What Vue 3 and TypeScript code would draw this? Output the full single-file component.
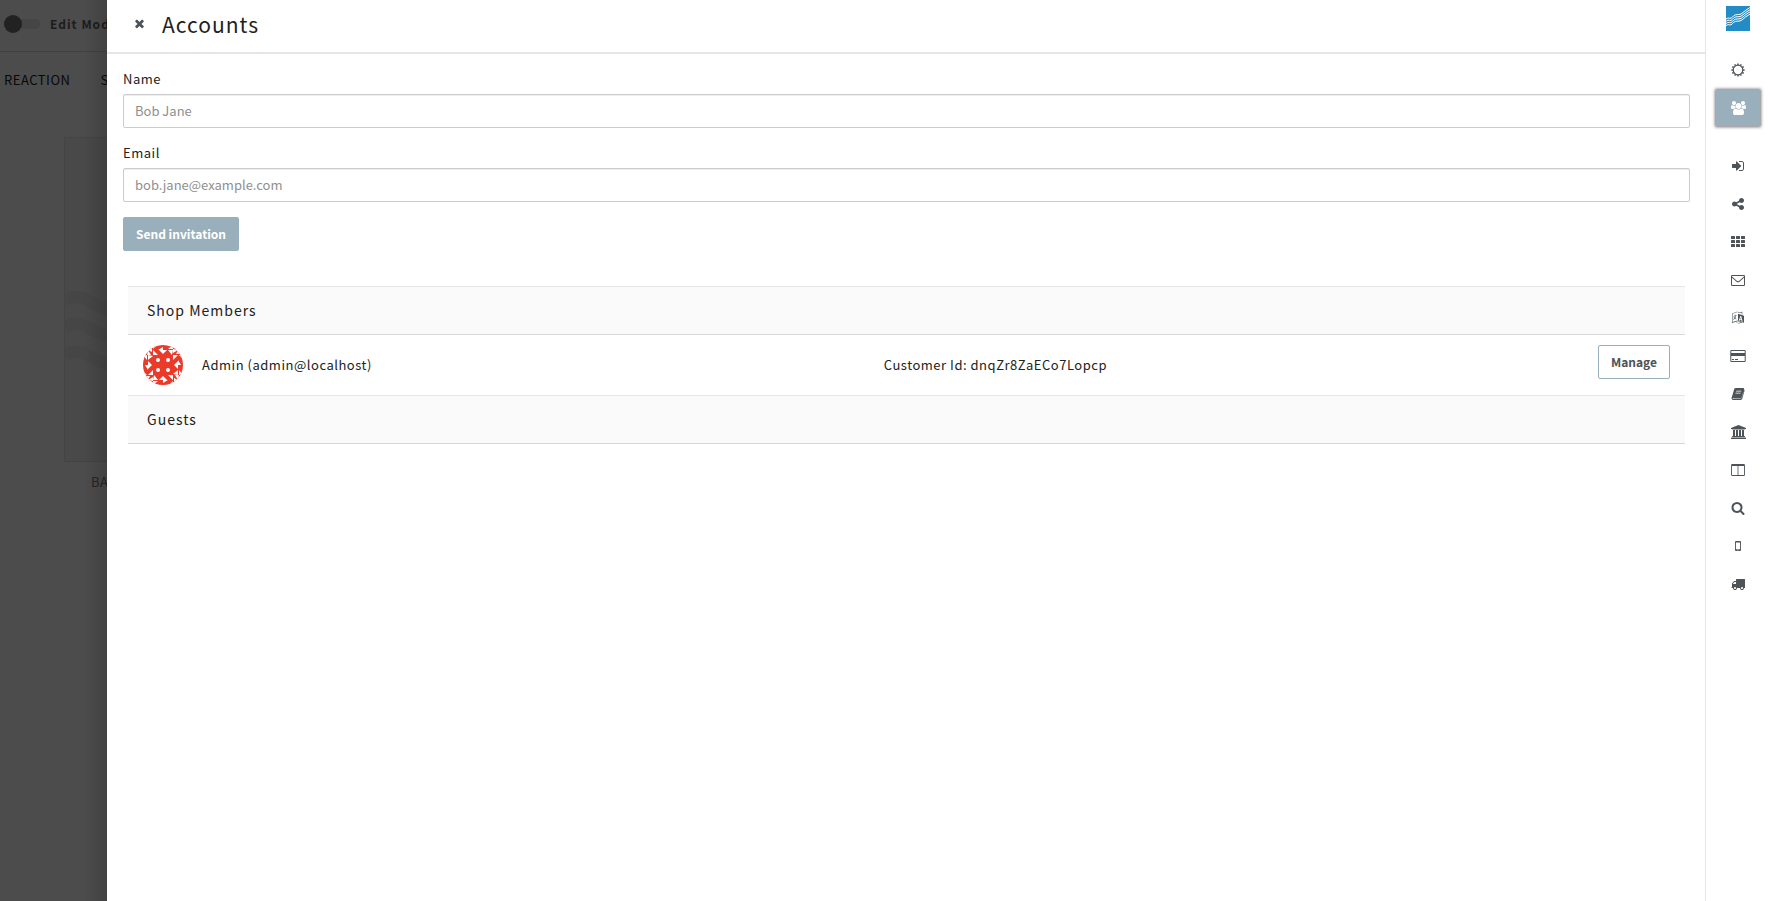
<script setup lang="ts">
import { ref } from 'vue'

interface Tool {
  id: string
  label: string
  box: string
  width: number
  path: string
}

interface Member {
  name: string
  email: string
  customerId: string
}

const name = ref('')
const email = ref('')
const editMode = ref(false)
const active = ref('accounts')

const members: Member[] = [
  { name: 'Admin', email: 'admin@localhost', customerId: 'dnqZr8ZaECo7Lopcp' },
]

const accounts: Tool = {
  id: 'accounts',
  label: 'Accounts',
  box: '0 0 1920 1792',
  width: 15,
  path: 'M593 896q-162 5-265 128h-134q-82 0-138-40.5t-56-118.5q0-353 124-353 6 0 43.5 21t97.5 42.5 119 21.5q67 0 133-23-5 37-5 66 0 139 81 256zm1071 637q0 120-73 189.5t-194 69.5h-874q-121 0-194-69.5t-73-189.5q0-53 3.5-103.5t14-109 26.5-108.5 43-97.5 62-81 85.5-53.5 111.5-20q10 0 43 21.5t73 48 107 48 135 21.5 135-21.5 107-48 73-48 43-21.5q61 0 111.5 20t85.5 53.5 62 81 43 97.5 26.5 108.5 14 109 3.5 103.5zm-1024-1277q0 106-75 181t-181 75-181-75-75-181 75-181 181-75 181 75 75 181zm704 384q0 159-112.5 271.5t-271.5 112.5-271.5-112.5-112.5-271.5 112.5-271.5 271.5-112.5 271.5 112.5 112.5 271.5zm576 225q0 78-56 118.5t-138 40.5h-134q-103-123-265-128 81-117 81-256 0-29-5-66 66 23 133 23 59 0 119-21.5t97.5-42.5 43.5-21q124 0 124 353zm-128-609q0 106-75 181t-181 75-181-75-75-181 75-181 181-75 181 75 75 181z',
}

const tools: Tool[] = [
  {
    id: 'login', label: 'Login services', box: '0 0 1792 1792', width: 14,
    path: 'M1312 896q0 26-19 45l-544 544q-19 19-45 19t-45-19-19-45v-288h-448q-26 0-45-19t-19-45v-384q0-26 19-45t45-19h448v-288q0-26 19-45t45-19 45 19l544 544q19 19 19 45zm352-352v704q0 119-84.500 203.500t-203.500 84.500h-320q-13 0-22.500-9.500t-9.500-22.500q0-4-1-20t-.5-26.500 3-23.500 10-19.500 20.500-6.500h320q66 0 113-47t47-113v-704q0-66-47-113t-113-47h-312l-11.500-1-11.500-3-8-5.500-7-9-2-13.500q0-4-1-20t-.5-26.500 3-23.500 10-19.500 20.500-6.500h320q119 0 203.500 84.500t84.500 203.500z',
  },
  {
    id: 'social', label: 'Social', box: '0 0 1792 1792', width: 14,
    path: 'M1344 1024q133 0 226.500 93.500t93.500 226.500-93.500 226.500-226.500 93.500-226.500-93.500-93.500-226.500q0-12 2-34l-360-180q-92 86-218 86-133 0-226.500-93.500t-93.500-226.500 93.500-226.500 226.500-93.500q126 0 218 86l360-180q-2-22-2-34 0-133 93.500-226.500t226.500-93.500 226.500 93.500 93.500 226.500-93.500 226.500-226.500 93.500q-126 0-218-86l-360 180q2 22 2 34t-2 34l360 180q92-86 218-86z',
  },
  {
    id: 'catalog', label: 'Catalog', box: '0 0 14 14', width: 14,
    path: 'M.6 1h2.800q.6 0 .6.600v1.800q0 .6-.6.600h-2.800q-.6 0-.6-.6v-1.800q0-.6.600-.6zM5.600 1h2.800q.6 0 .6.600v1.800q0 .6-.6.600h-2.800q-.6 0-.6-.6v-1.800q0-.6.600-.6zM10.600 1h2.800q.6 0 .6.600v1.800q0 .6-.6.600h-2.800q-.6 0-.6-.6v-1.800q0-.6.600-.6zM.6 5h2.800q.6 0 .6.600v1.800q0 .6-.6.600h-2.800q-.6 0-.6-.6v-1.800q0-.6.600-.6zM5.600 5h2.800q.6 0 .6.600v1.800q0 .6-.6.600h-2.800q-.6 0-.6-.6v-1.800q0-.6.600-.6zM10.600 5h2.800q.6 0 .6.600v1.800q0 .6-.6.600h-2.800q-.6 0-.6-.6v-1.800q0-.6.600-.6zM.6 9h2.800q.6 0 .6.600v1.800q0 .6-.6.600h-2.800q-.6 0-.6-.6v-1.800q0-.6.600-.6zM5.600 9h2.800q.6 0 .6.600v1.800q0 .6-.6.600h-2.800q-.6 0-.6-.6v-1.800q0-.6.600-.6zM10.600 9h2.800q.6 0 .6.600v1.800q0 .6-.6.600h-2.800q-.6 0-.6-.6v-1.800q0-.6.600-.6z',
  },
  {
    id: 'email', label: 'Email', box: '0 0 14 14', width: 14,
    path: 'M1.200 2h11.600q1.200 0 1.200 1.200v8.600q0 1.200-1.200 1.200h-11.600q-1.200 0-1.200-1.200v-8.600q0-1.200 1.200-1.200zM1 4.800v7q0 .2.200.2h11.600q.2 0 .2-.2v-7l-4.200 3.600q-1 .9-1.800.9t-1.800-.9zM1 3.200v.3l4.500 3.900q.9.800 1.500.8t1.500-.8l4.500-3.900v-.3q0-.2-.2-.2h-11.600q-.2 0-.2.200z',
  },
  {
    id: 'i18n', label: 'Languages', box: '0 0 14 14', width: 14,
    path: 'M1 2.500l5.500-2v.4l-5 1.900v8.300l5-1.700 6.500 2v.5l-2-.5-3 1-3-.8v-.3l2.800.6 2-.7-3.300-1-5.500 1.700zM3.700 3.500h.6v1h1.400v.6h-.7q-.2 1.200-.8 2l1.200.9-.3.600-1.300-1-1.300 1.200-.4-.5 1.300-1.200-.7-1 .5-.3.600.8.600-1.300-2 .3v-.5l1.300-.2zM7 2.800l6 2v7l-6-1.900zM9.300 5l-1.500 4.500.9.300.3-.9 1.500.4.300 1.100.9.300-1.400-5.400zM9.700 6.200l.5 2.300-1-.3zM6.800 1.500l4.500-.8v3l-.6-.2v-2.100l-3.900.7z',
  },
  {
    id: 'payments', label: 'Payments', box: '0 0 16 14', width: 16,
    path: 'M1.500 1h13q1.200 0 1.200 1.200v9.600q0 1.200-1.200 1.200h-13q-1.200 0-1.200-1.200v-9.600q0-1.200 1.200-1.200zM1.500 2q-.2 0-.2.200v1.800h13.400v-1.800q0-.2-.2-.2zM1.300 7v4.800q0 .2.200.2h13q.2 0 .2-.2v-4.800zM2 10h2v1h-2zM5 10h3v1h-3z',
  },
  {
    id: 'taxonomy', label: 'Orders', box: '0 0 14 14', width: 14,
    path: 'M5 1h7.300q1 0 .8 1l-.1.500q.7.300.5 1.200l-2.200 7.900q-.3 1.400-1.600 1.400h-7.200q-1.500 0-1.900-1.300-.2-.6 0-1l2.500-8.300q.3-1.400 1.900-1.400zM5.300 3.700l-.2.800h5l.3-.8zM4.700 5.700l-.3.800h5l.3-.8zM1.800 10.700q-.4 1.400.8 1.400h6.800q.8 0 1-.8l1.900-6.700.1.300-1.700 6q-.3.600-1.100.6h-6.500q-1 0-1.300-.8z',
  },
  {
    id: 'taxes', label: 'Taxes', box: '0 0 1920 1792', width: 15,
    path: 'M960 0l960 384v128h-128q0 26-20.500 45t-48.500 19h-1526q-28 0-48.500-19t-20.500-45h-128v-128zm-704 640h256v768h128v-768h256v768h128v-768h256v768h128v-768h256v768h59q28 0 48.500 19t20.500 45v64h-1664v-64q0-26 20.500-45t48.500-19h59v-768zm1595 960q28 0 48.500 19t20.500 45v128h-1920v-128q0-26 20.500-45t48.500-19h1782z',
  },
  {
    id: 'layout', label: 'Layout', box: '0 0 14 14', width: 14,
    path: 'M1.200 1h11.600q1.100 0 1.100 1.100v9.800q0 1.100-1.100 1.100h-11.600q-1.100 0-1.100-1.100v-9.800q0-1.100 1.100-1.100zM1 3v8.900q0 .2.200.2h5.400v-9.100zM7.400 3v9.100h5.400q.2 0 .2-.2v-8.900z',
  },
  {
    id: 'search', label: 'Search', box: '0 0 1792 1792', width: 14,
    path: 'M1216 832q0-185-131.500-316.500t-316.500-131.500-316.500 131.500-131.500 316.500 131.500 316.500 316.500 131.500 316.500-131.500 131.500-316.500zm512 832q0 52-38 90t-90 38q-54 0-90-38l-343-342q-179 124-399 124-143 0-273.500-55.500t-225-150-150-225-55.500-273.500 55.500-273.500 150-225 225-150 273.500-55.500 273.500 55.500 225 150 150 225 55.500 273.500q0 220-124 399l343 343q37 37 37 90z',
  },
  {
    id: 'sms', label: 'SMS', box: '0 0 14 14', width: 14,
    path: 'M5 2h4q1 0 1 1v8q0 1-1 1h-4q-1 0-1-1v-8q0-1 1-1zM4.900 3.500v6.800h4.200v-6.800zM6.500 10.800v.6h1v-.6z',
  },
  {
    id: 'shipping', label: 'Shipping', box: '0 0 1792 1792', width: 14,
    path: 'M640 1408q0-52-38-90t-90-38-90 38-38 90 38 90 90 38 90-38 38-90zm-384-512h384v-256h-158q-13 0-22 9l-195 195q-9 9-9 22v30zm1280 512q0-52-38-90t-90-38-90 38-38 90 38 90 90 38 90-38 38-90zm256-1088v1024q0 15-4 26.500t-13.500 18.500-16.500 11.500-23.500 6-22.500 2-25.500 0-22.500-.5q0 106-75 181t-181 75-181-75-75-181h-384q0 106-75 181t-181 75-181-75-75-181h-64q-3 0-22.500.5t-25.500 0-22.500-2-23.500-6-16.500-11.500-13.500-18.500-4-26.500q0-26 19-45t45-19v-320q0-8-.5-35t0-38 2.500-34.500 6.500-37 14-30.500 22.500-30l198-198q19-19 50.500-32t58.500-13h160v-192q0-26 19-45t45-19h1024q26 0 45 19t19 45z',
  },
]
</script>

<template>
  <div class="app">
    <div class="shop">
      <div class="shop-bar">
        <label class="switch">
          <input v-model="editMode" type="checkbox" class="switch-input" />
          <span class="switch-track"><span class="switch-knob"></span></span>
          <span>Edit Mode</span>
        </label>
      </div>
      <nav class="shop-nav">
        <a href="#">REACTION</a>
        <a href="#">S</a>
      </nav>
      <div class="product">
        <svg class="product-art" viewBox="0 0 324 324" aria-hidden="true">
          <g fill="none" stroke="#464646" stroke-width="12">
            <path d="M0 163q12-8 26 2l60 26 40-10 90-60" />
            <path d="M0 190q12-8 26 2l60 26 40-10 90-60" />
            <path d="M0 218q12-8 26 2l60 26 40-10 90-60" />
          </g>
        </svg>
        <span class="product-name">BA</span>
      </div>
      <div class="shade"></div>
    </div>

    <main class="panel">
      <header class="panel-head">
        <button type="button" class="close" aria-label="Close">
          <svg viewBox="0 0 1792 1792" width="13" height="13"><path d="M1490 1322q0 40-28 68l-136 136q-28 28-68 28t-68-28l-294-294-294 294q-28 28-68 28t-68-28l-136-136q-28-28-28-68t28-68l294-294-294-294q-28-28-28-68t28-68l136-136q28-28 68-28t68 28l294 294 294-294q28-28 68-28t68 28l136 136q28 28 28 68t-28 68l-294 294 294 294q28 28 28 68z" /></svg>
        </button>
        <h1>Accounts</h1>
      </header>

      <form class="invite" @submit.prevent>
        <label for="invite-name">Name</label>
        <input id="invite-name" v-model="name" type="text" placeholder="Bob Jane" />
        <label for="invite-email">Email</label>
        <input id="invite-email" v-model="email" type="email" placeholder="bob.jane@example.com" />
        <button type="submit" class="send">Send invitation</button>
      </form>

      <section class="groups">
        <h2>Shop Members</h2>
        <div v-for="m in members" :key="m.customerId" class="member">
          <svg class="avatar" viewBox="0 0 40 40" width="40" height="40" aria-hidden="true">
            <defs>
              <clipPath id="avatar-round"><circle cx="20" cy="20" r="20" /></clipPath>
              <g id="avatar-side">
                <path d="M10 0h4l-4 4zM10 5l5 5h-5zM15 5l5-3v3zM16 5h4v4z" />
                <path d="M20 5h4l-4 4zM25 4l5-4v4zM25 5h5l-1 5z" />
                <path d="M5 5l4-2v4zM5 5l3 5h-4z" />
              </g>
            </defs>
            <g clip-path="url(#avatar-round)">
              <rect width="40" height="40" fill="#e93a2a" />
              <g fill="#fff">
                <use v-for="r in [0, 90, 180, 270]" :key="r" href="#avatar-side" :transform="`rotate(${r} 20 20)`" />
                <circle cx="15" cy="15" r="2" />
                <circle cx="25" cy="15" r="2" />
                <circle cx="15" cy="25" r="2" />
                <circle cx="25" cy="25" r="2" />
              </g>
            </g>
          </svg>
          <span>{{ m.name }} ({{ m.email }})</span>
          <span>Customer Id: {{ m.customerId }}</span>
          <button type="button" class="manage">Manage</button>
        </div>
        <h2>Guests</h2>
      </section>
    </main>

    <aside class="rail">
      <a href="#" class="logo" aria-label="Reaction">
        <svg viewBox="0 0 24 25" width="24" height="25">
          <rect width="24" height="25" fill="#238cc5" />
          <g fill="none" stroke="#fff" stroke-width="1">
            <path d="M0 13q2-1.500 3.500-.8t3-1.200 3-2.200 3.500-.3 4-2 7-5" />
            <path d="M0 15.200q2-1.500 3.500-.8t3-1.200 3-2.200 3.500-.3 4-2 7-5" />
            <path d="M0 17.400q2-1.500 3.500-.8t3-1.200 3-2.200 3.500-.3 4-2 7-5" />
            <path d="M0 19.600q2-1.500 3.500-.8t3-1.200 3-2.200 3.500-.3 4-2 7-5" />
          </g>
        </svg>
      </a>
      <button type="button" class="tool" aria-label="Dashboard" @click="active = 'dashboard'">
        <svg viewBox="0 0 14 14" width="14" height="14">
          <circle cx="7" cy="7" r="4.800" fill="none" stroke="currentColor" stroke-width="1.200" />
          <g stroke="currentColor" stroke-width="1.500">
            <path v-for="n in 12" :key="n" d="M7 .4v1.600" :transform="`rotate(${n * 30} 7 7)`" />
          </g>
        </svg>
      </button>
      <button type="button" class="tool" :class="{ on: active === accounts.id }" :aria-label="accounts.label" @click="active = accounts.id">
        <svg :viewBox="accounts.box" :width="accounts.width" height="14"><path :d="accounts.path" /></svg>
      </button>
      <div class="tools">
        <button v-for="t in tools" :key="t.id" type="button" class="tool" :class="{ on: active === t.id }" :aria-label="t.label" @click="active = t.id">
          <svg :viewBox="t.box" :width="t.width" height="14"><path :d="t.path" fill-rule="evenodd" /></svg>
        </button>
      </div>
    </aside>
  </div>
</template>

<style>
body {
  margin: 0;
}
</style>

<style scoped>
.app {
  display: flex;
  min-height: 100vh;
  font-family: "Noto Sans CJK SC", "Noto Sans", sans-serif;
  font-size: 13px;
  line-height: 20px;
  letter-spacing: 0.04em;
  color: #222;
  background: #fff;
}
.app *,
.app *::before {
  box-sizing: border-box;
}
button,
input {
  font: inherit;
  letter-spacing: normal;
}
svg {
  display: block;
  fill: currentColor;
}

/* Storefront under the dimmed backdrop */
.shop {
  position: relative;
  flex: none;
  width: 107px;
  overflow: hidden;
  background: #4c4c4c;
  color: #1c1c1c;
  white-space: nowrap;
}
.shop-bar {
  display: flex;
  align-items: center;
  height: 52px;
  padding: 0 4px 4px;
  border-bottom: 1px solid #424242;
  font-size: 12px;
  font-weight: 700;
  letter-spacing: 1px;
}
.switch {
  display: flex;
  align-items: center;
  gap: 10px;
}
.switch-input {
  position: absolute;
  opacity: 0;
}
.switch-track {
  display: flex;
  align-items: center;
  width: 36px;
  height: 10px;
  border-radius: 5px;
  background: #454545;
}
.switch-knob {
  width: 18px;
  height: 18px;
  flex: none;
  border-radius: 50%;
  background: #222;
}
.shop-nav {
  display: flex;
  gap: 30px;
  padding: 18px 4px;
}
.shop-nav a {
  color: #080808;
  text-decoration: none;
}
.product {
  width: 324px;
  margin: 29px 0 0 64px;
}
.product-art {
  width: 324px;
  height: 325px;
  border: 1px solid #444;
  background: #494949;
}
.product-name {
  display: block;
  padding: 10px 27px;
  color: #252525;
}
.shade {
  position: absolute;
  inset: 0 0 0 auto;
  width: 24px;
  background: linear-gradient(to right, rgba(0, 0, 0, 0), rgba(0, 0, 0, 0.14));
}

/* Accounts panel */
.panel {
  flex: 1;
  min-width: 0;
}
.panel-head {
  display: flex;
  align-items: center;
  gap: 16px;
  height: 54px;
  padding: 0 26px 5px;
  border-bottom: 2px solid #e6e6e6;
}
.close {
  display: flex;
  padding: 0;
  border: 0;
  background: none;
  color: #4d5357;
}
h1 {
  margin: 0;
  font-size: 21px;
  line-height: 32px;
  font-weight: 400;
  letter-spacing: 1px;
}
.invite {
  display: flex;
  flex-direction: column;
  padding: 15px 15px 0 16px;
}
.invite label {
  margin-bottom: 5px;
}
.invite input {
  height: 34px;
  margin-bottom: 15px;
  padding: 5px 11px 7px;
  border: 1px solid #ccc;
  border-radius: 2px;
  box-shadow: inset 0 1px 1px rgba(0, 0, 0, 0.075);
  color: #555;
  outline: 0;
}
.invite input::placeholder {
  color: #8f8f8f;
  opacity: 1;
}
.send,
.manage {
  height: 34px;
  padding: 0 12px;
  border: 1px solid #9aafbc;
  border-radius: 2px;
  font-size: 12px;
  font-weight: 700;
}
.send {
  align-self: flex-start;
  background: #9aafbc;
  color: #fff;
}
.manage {
  align-self: flex-start;
  background: #fff;
  color: #4d5357;
}
.groups {
  margin: 35px 20px 0 21px;
}
h2 {
  margin: 0;
  padding: 12px 19px;
  border-top: 1px solid #e6e6e6;
  border-bottom: 1px solid #d8d8d8;
  background: #fafafa;
  font-size: 14px;
  line-height: 23px;
  font-weight: 400;
  letter-spacing: 1px;
}
.member {
  display: grid;
  grid-template-columns: 59px 21fr 22fr auto;
  align-items: center;
  padding: 10px 15px;
}
.avatar {
  justify-self: start;
}

/* Tool rail */
.rail {
  flex: none;
  display: flex;
  flex-direction: column;
  align-items: center;
  width: 65px;
  padding-top: 6px;
  border-left: 1px solid #e6e6e6;
}
.logo {
  margin-bottom: 20px;
}
.tool {
  display: flex;
  align-items: center;
  justify-content: center;
  width: 44px;
  height: 36px;
  margin: 1px 0;
  padding: 0;
  border: 0;
  background: none;
  color: #4d5357;
}
.tool.on {
  background: #9aafbc;
  color: #fff;
  box-shadow: 0 0 3px 1px #77707a;
}
.tools {
  display: flex;
  flex-direction: column;
  margin-top: 20px;
}
</style>
